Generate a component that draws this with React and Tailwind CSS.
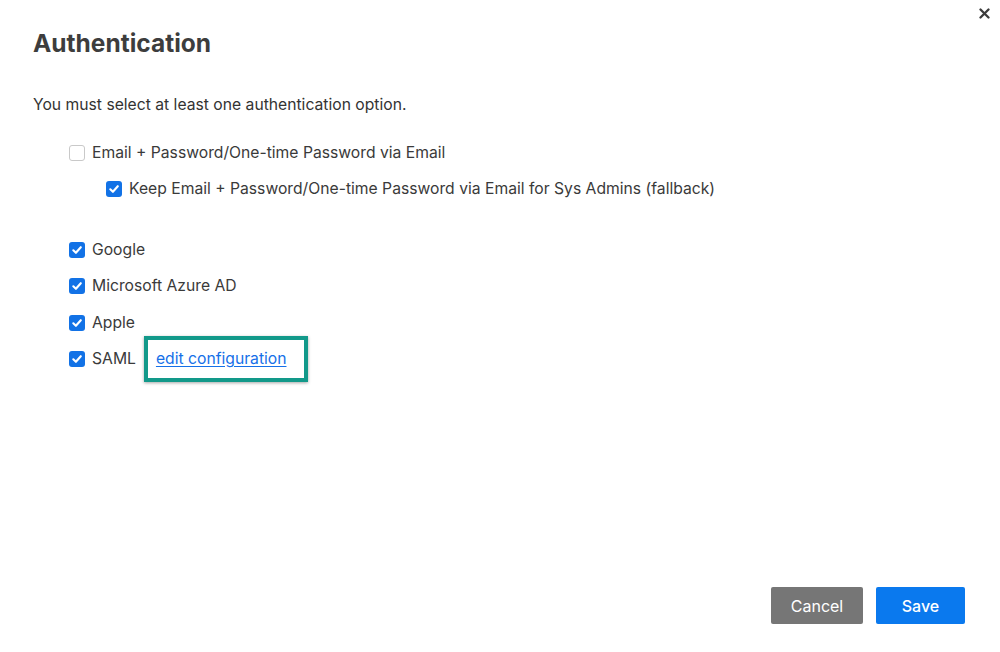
const font = { fontFamily: 'Inter, "Noto Sans", sans-serif' }

function Box({ checked }) {
  if (!checked) {
    return <span className="block w-4 h-4 shrink-0 rounded-[3px] border border-[#c9c9c9] bg-white" />
  }
  return (
    <span className="flex w-4 h-4 shrink-0 items-center justify-center rounded-[3px] bg-[#1272e6]">
      <svg width="12" height="12" viewBox="0 0 12 12" fill="none">
        <path d="M2.3 6.3 L4.9 8.8 L9.8 3.2" stroke="white" strokeWidth="2.1" strokeLinecap="round" strokeLinejoin="round" />
      </svg>
    </span>
  )
}

function Row({ checked, label, className = '', children }) {
  return (
    <div className={`flex items-center h-5 ${className}`}>
      <Box checked={checked} />
      <span className="ml-[7px] text-[15.7px] leading-5 text-[#3a3a3a]">{label}</span>
      {children}
    </div>
  )
}

export default function App() {
  return (
    <div className="relative w-[1000px] h-[652px] bg-white flex flex-col text-[#333]" style={font}>
      <button className="absolute right-[10px] top-[7px] w-[12px] h-[12px] flex items-center justify-center">
        <svg width="11" height="11" viewBox="0 0 11 11">
          <path d="M1.5 1.5 L9.5 9.5 M9.5 1.5 L1.5 9.5" stroke="#3b3b3b" strokeWidth="2.3" strokeLinecap="round" />
        </svg>
      </button>

      <div className="px-[33px] pt-[28px]">
        <h1 className="text-[24.5px] leading-[30px] font-bold text-[#3d3d3d]">Authentication</h1>
        <p className="mt-[37px] text-[15.7px] leading-5 text-[#333]">You must select at least one authentication option.</p>

        <div className="pl-[36px]">
          <Row className="mt-[28px]" checked={false} label="Email + Password/One-time Password via Email" />
          <Row
            className="mt-[16px] ml-[37px]"
            checked
            label="Keep Email + Password/One-time Password via Email for Sys Admins (fallback)"
          />
          <Row className="mt-[41px]" checked label="Google" />
          <Row className="mt-[16px]" checked label="Microsoft Azure AD" />
          <Row className="mt-[17px]" checked label="Apple" />
          <Row className="mt-[16px]" checked label="SAML">
            <span className="relative inline-block h-5 ml-[20px]">
              <span className="absolute left-[-12px] right-[-21px] top-[-13px] bottom-[-13px] border-[4px] border-[#12998a] shadow-[0_1px_3px_rgba(0,0,0,0.35)]" />
              <a href="#" className="relative block text-[15.7px] leading-5 text-[#1570e8] underline underline-offset-2">
                edit configuration
              </a>
            </span>
          </Row>
        </div>
      </div>

      <div className="flex-1" />

      <div className="flex justify-end gap-[13px] pr-[35px] pb-[28px]">
        <button className="w-[92px] h-[37px] rounded-[2px] bg-[#767676] text-white text-[16px]">Cancel</button>
        <button className="w-[89px] h-[37px] rounded-[2px] bg-[#0a79ee] text-white text-[16px] font-medium">Save</button>
      </div>
    </div>
  )
}
